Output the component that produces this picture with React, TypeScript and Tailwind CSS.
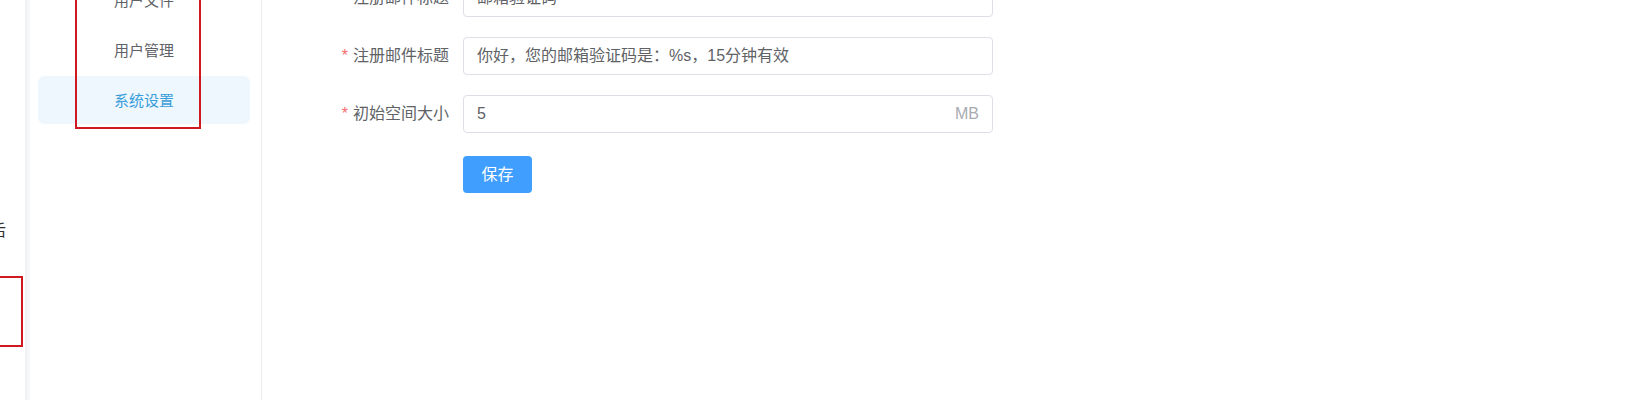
const menuItems = [
  { label: '用户文件', active: false },
  { label: '用户管理', active: false },
  { label: '系统设置', active: true },
];

const fields = [
  { label: '注册邮件标题', value: '邮箱验证码', suffix: '' },
  { label: '注册邮件标题', value: '你好，您的邮箱验证码是：%s，15分钟有效', suffix: '' },
  { label: '初始空间大小', value: '5', suffix: 'MB' },
];

const font = { fontFamily: "'Liberation Sans', 'Noto Sans CJK SC', sans-serif" };

export default function App() {
  return (
    <div className="flex h-[400px] w-[1628px] overflow-hidden bg-white text-[#606266]" style={font}>
      {/* 主侧栏（被裁掉的部分） */}
      <div className="relative w-[25px] shrink-0 bg-white">
        <div className="mt-[220px] flex h-[22px] w-[7px] overflow-hidden">
          <span className="-ml-[10px] text-[16px] leading-[22px] text-[#303133]">后</span>
        </div>
        <div className="absolute left-[-4px] top-[276px] h-[71px] w-[27px] border-[2.5px] border-[#cf1820]" />
      </div>
      <div className="w-[5px] shrink-0 bg-gradient-to-r from-[#eef0f3] to-[#fafafa]" />

      {/* 子菜单 */}
      <div className="relative w-[232px] shrink-0 border-r border-[#ececec] bg-white">
        <div className="-mt-[24px] flex flex-col gap-[2px] pl-[8px] pr-[11px]">
          {menuItems.map((item) => (
            <div
              key={item.label}
              className={`flex h-[48px] items-center justify-center rounded-[7px] pt-[3px] text-[15px] ${
                item.active ? 'bg-[#edf7fd] text-[#3a9edb]' : 'text-[#606266]'
              }`}
            >
              {item.label}
            </div>
          ))}
        </div>
        <div className="absolute left-[45px] top-[-10px] h-[139px] w-[126px] border-[2.5px] border-[#cf1820]" />
      </div>

      {/* 表单 */}
      <div className="flex-1">
        <div className="-mt-[21px] flex flex-col gap-[20px]">
          {fields.map((f, i) => (
            <div key={i} className="flex h-[38px] items-center">
              <div className="flex w-[201px] items-center justify-end pr-[14px] text-[16px]">
                <span className="mr-[5px] text-[#f56c6c]">*</span>
                <span>{f.label}</span>
              </div>
              <div className="flex h-[38px] w-[530px] items-center justify-between rounded-[4px] border border-[#dcdfe6] px-[13px] text-[16px]">
                <span>{f.value}</span>
                {f.suffix && <span className="text-[#a8abb2]">{f.suffix}</span>}
              </div>
            </div>
          ))}
          <div className="flex pl-[201px] pt-[3px]">
            <button className="h-[37px] w-[69px] rounded-[4px] bg-[#409eff] text-[16px] text-white">
              保存
            </button>
          </div>
        </div>
      </div>
    </div>
  );
}
